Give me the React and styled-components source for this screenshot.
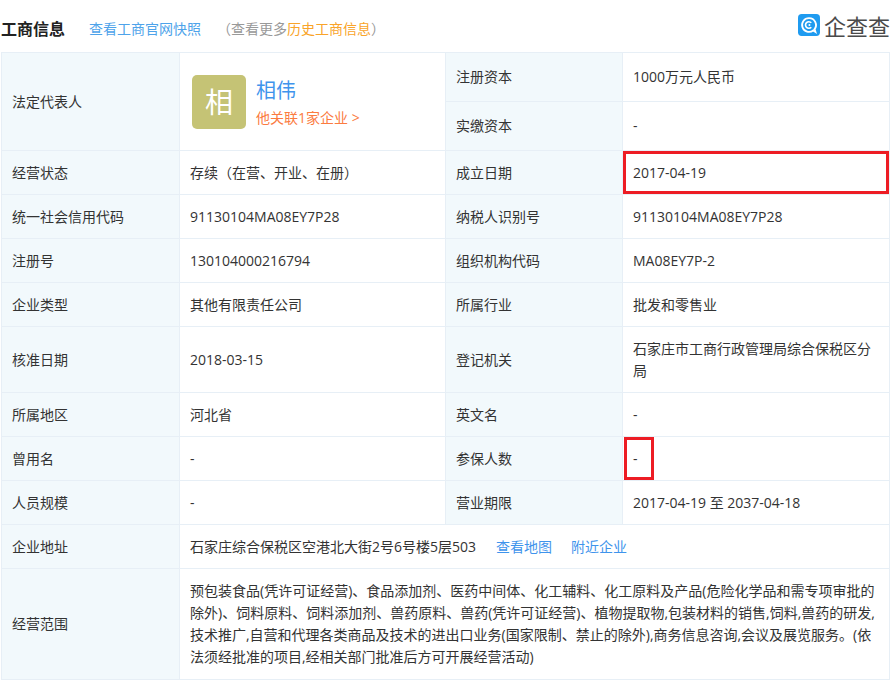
import React from "react";
import styled, { createGlobalStyle } from "styled-components";

const Global = createGlobalStyle`
  html, body { margin: 0; padding: 0; background: #fff; overflow: hidden; }
  body { font-family: "Open Sans", "Noto Sans CJK SC", sans-serif; color: #333; }
`;
const Page = styled.div`
  width: 890px;
  height: 680px;
  overflow: hidden;
`;
const Header = styled.header`
  height: 52px;
  display: flex;
  align-items: center;
  font-size: 14px;
  padding-top: 4px;
  box-sizing: border-box;
  white-space: nowrap;
`;
const Title = styled.h2`
  margin: 0 24px 0 1px;
  font-size: 16px;
  font-weight: 700;
  color: #222;
`;
const HeaderLink = styled.span`
  color: #4ea3ea;
  margin-right: 16px;
`;
const Muted = styled.span`
  color: #999;
`;
const Orange = styled.span`
  color: #f9a42a;
`;
const Logo = styled.div`
  margin-left: auto;
  display: flex;
  align-items: center;
  gap: 4px;
  margin-top: -6px;
  font-size: 22px;
  letter-spacing: 0;
  color: #4a4a4a;
  width: 92px;
  flex-shrink: 0;
`;
const Table = styled.table`
  border-collapse: collapse;
  table-layout: fixed;
  width: 888px;
  margin-left: 1px;
  font-size: 14px;
  line-height: 22px;
`;
const Row = styled.tr`
  height: ${(p) => p.$h}px;
`;
const Label = styled.td`
  border: 1px solid #e7eff6;
  background: #f2f9fc;
  padding: 0 10px;
  color: #333;
`;
const Value = styled.td`
  border: 1px solid #e7eff6;
  padding: 0 10px;
  color: #333;
  position: relative;
`;
const Marker = styled.i`
  position: absolute;
  left: ${(p) => p.$left}px;
  top: 0px;
  bottom: 0px;
  width: ${(p) => p.$w};
  border: 3px solid #ed1c24;
  box-sizing: border-box;
`;
const Person = styled.div`
  display: flex;
  align-items: center;
  gap: 10px;
  padding-left: 2px;
`;
const Avatar = styled.div`
  width: 54px;
  height: 54px;
  border-radius: 5px;
  background: #c5c375;
  color: #fff;
  font-size: 28px;
  display: flex;
  align-items: center;
  justify-content: center;
`;
const PersonInfo = styled.div`
  display: flex;
  flex-direction: column;
  gap: 2px;
`;
const Name = styled.span`
  color: #3f94ec;
  font-size: 20px;
  line-height: 30px;
`;
const Related = styled.span`
  color: #fb7b3f;
  font-size: 14px;
  line-height: 20px;
`;
const MapLink = styled.span`
  color: #3f94ec;
  margin-left: ${(p) => p.$gap}px;
`;

const LogoIcon = () => (
  <svg width="24" height="24" viewBox="0 0 24 24">
    <rect width="24" height="24" rx="4" fill="#1f9bf0" />
    <path d="M12 4.5a7.5 7.5 0 1 0 4.6 13.4l2.4 1.6-.9-3A7.5 7.5 0 0 0 12 4.5z" fill="none" stroke="#fff" strokeWidth="2" />
    <path d="M14.5 9.6a3.6 3.6 0 1 0 0 4.8" fill="none" stroke="#fff" strokeWidth="1.8" />
    <circle cx="12.5" cy="12" r="1.1" fill="#fff" />
  </svg>
);

const pairs = [
  [44, "统一社会信用代码", "91130104MA08EY7P28", "纳税人识别号", "91130104MA08EY7P28"],
  [44, "注册号", "130104000216794", "组织机构代码", "MA08EY7P-2"],
  [44, "企业类型", "其他有限责任公司", "所属行业", "批发和零售业"],
  [66, "核准日期", "2018-03-15", "登记机关", "石家庄市工商行政管理局综合保税区分局"],
  [44, "所属地区", "河北省", "英文名", "-"],
];

export default function App() {
  return (
    <Page>
      <Global />
      <Header>
        <Title>工商信息</Title>
        <HeaderLink>查看工商官网快照</HeaderLink>
        <Muted>（查看更多<Orange>历史工商信息</Orange>）</Muted>
        <Logo>
          <LogoIcon />
          <span>企查查</span>
        </Logo>
      </Header>
      <Table>
        <colgroup>
          <col width="178" />
          <col width="266" />
          <col width="177" />
          <col width="267" />
        </colgroup>
        <tbody>
          <Row $h={49}>
            <Label rowSpan={2}>法定代表人</Label>
            <Value rowSpan={2}>
              <Person>
                <Avatar>相</Avatar>
                <PersonInfo>
                  <Name>相伟</Name>
                  <Related>他关联1家企业 &gt;</Related>
                </PersonInfo>
              </Person>
            </Value>
            <Label>注册资本</Label>
            <Value>1000万元人民币</Value>
          </Row>
          <Row $h={49}>
            <Label>实缴资本</Label>
            <Value>-</Value>
          </Row>
          <Row $h={44}>
            <Label>经营状态</Label>
            <Value>存续（在营、开业、在册）</Value>
            <Label>成立日期</Label>
            <Value>
              <Marker $left={0} $w="266px" />
              2017-04-19
            </Value>
          </Row>
          {pairs.map(([h, a, b, c, d]) => (
            <Row key={a} $h={h}>
              <Label>{a}</Label>
              <Value>{b}</Value>
              <Label>{c}</Label>
              <Value>{d}</Value>
            </Row>
          ))}
          <Row $h={44}>
            <Label>曾用名</Label>
            <Value>-</Value>
            <Label>参保人数</Label>
            <Value>
              <Marker $left={1} $w="30px" />
              -
            </Value>
          </Row>
          <Row $h={44}>
            <Label>人员规模</Label>
            <Value>-</Value>
            <Label>营业期限</Label>
            <Value>2017-04-19 至 2037-04-18</Value>
          </Row>
          <Row $h={44}>
            <Label>企业地址</Label>
            <Value colSpan={3}>
              石家庄综合保税区空港北大街2号6号楼5层503
              <MapLink $gap={20}>查看地图</MapLink>
              <MapLink $gap={19}>附近企业</MapLink>
            </Value>
          </Row>
          <Row $h={111}>
            <Label>经营范围</Label>
            <Value colSpan={3}>
              预包装食品(凭许可证经营)、食品添加剂、医药中间体、化工辅料、化工原料及产品(危险化学品和需专项审批的除外)、饲料原料、饲料添加剂、兽药原料、兽药(凭许可证经营)、植物提取物,包装材料的销售,饲料,兽药的研发,技术推广,自营和代理各类商品及技术的进出口业务(国家限制、禁止的除外),商务信息咨询,会议及展览服务。(依法须经批准的项目,经相关部门批准后方可开展经营活动)
            </Value>
          </Row>
        </tbody>
      </Table>
    </Page>
  );
}
